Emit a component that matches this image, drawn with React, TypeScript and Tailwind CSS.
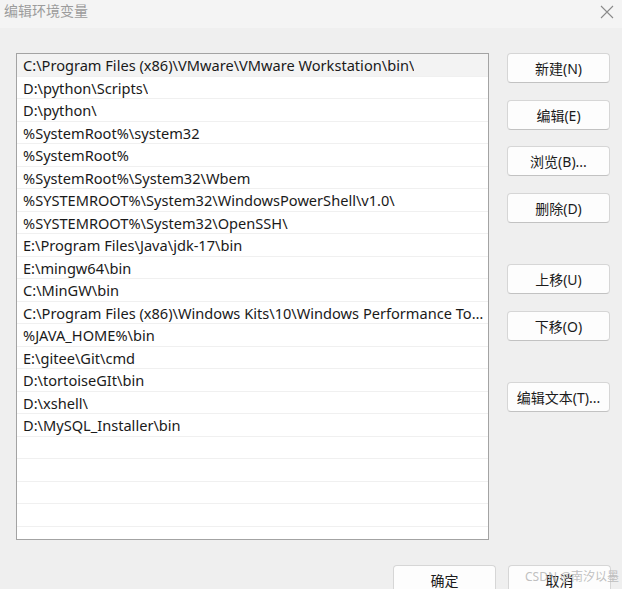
const PATHS = [
  'C:\\Program Files (x86)\\VMware\\VMware Workstation\\bin\\',
  'D:\\python\\Scripts\\',
  'D:\\python\\',
  '%SystemRoot%\\system32',
  '%SystemRoot%',
  '%SystemRoot%\\System32\\Wbem',
  '%SYSTEMROOT%\\System32\\WindowsPowerShell\\v1.0\\',
  '%SYSTEMROOT%\\System32\\OpenSSH\\',
  'E:\\Program Files\\Java\\jdk-17\\bin',
  'E:\\mingw64\\bin',
  'C:\\MinGW\\bin',
  'C:\\Program Files (x86)\\Windows Kits\\10\\Windows Performance Toolkit\\',
  '%JAVA_HOME%\\bin',
  'E:\\gitee\\Git\\cmd',
  'D:\\tortoiseGIt\\bin',
  'D:\\xshell\\',
  'D:\\MySQL_Installer\\bin',
  '',
  '',
  '',
  '',
  '',
]

const FONT = "font-['Segoe_UI','Noto_Sans','Noto_Sans_CJK_SC',sans-serif]"

function DialogButton({ label, className }: { label: string; className?: string }) {
  return (
    <button
      className={`flex h-[30px] w-[103px] items-center justify-center rounded-[4px] border border-[#d6d6d6] border-b-[#c2c2c2] bg-[#fdfdfd] pt-[1px] text-[14px] text-[#1b1b1b] ${className ?? ''}`}
    >
      {label}
    </button>
  )
}

export default function App() {
  return (
    <div className={`relative h-[589px] w-[622px] overflow-hidden bg-[#efefef] ${FONT}`}>
      {/* title bar */}
      <div className="flex h-[28px] items-start justify-between bg-[#f4f4f4] pl-[4px] pr-[8px]">
        <span className="pt-[1px] text-[14px] leading-[20px] text-[#9c9c9c]">编辑环境变量</span>
        <svg className="mt-[5px]" width="14" height="14" viewBox="0 0 14 14">
          <path d="M1 1L13 13M13 1L1 13" stroke="#8a8a8a" strokeWidth="1.1" fill="none" />
        </svg>
      </div>

      <div className="flex pt-[25px]">
        {/* path list */}
        <div className="ml-[16px] h-[487px] w-[473px] overflow-hidden border border-[#a3a3a3] bg-white">
          {PATHS.map((p, i) => (
            <div
              key={i}
              className={`flex h-[22.5px] items-center border-b border-[#f0f0f0] pl-[6px] pr-[3px] pt-[3px] text-[14.6px] text-[#1a1a1a] ${
                i === 0 ? 'bg-[#f3f3f3]' : ''
              }`}
            >
              <span className="truncate">{p}</span>
            </div>
          ))}
        </div>

        {/* side buttons */}
        <div className="ml-[18px] flex flex-col">
          <DialogButton label="新建(N)" />
          <DialogButton label="编辑(E)" className="mt-[17px]" />
          <DialogButton label="浏览(B)..." className="mt-[16px]" />
          <DialogButton label="删除(D)" className="mt-[17px]" />
          <DialogButton label="上移(U)" className="mt-[41px]" />
          <DialogButton label="下移(O)" className="mt-[17px]" />
          <DialogButton label="编辑文本(T)..." className="mt-[41px]" />
        </div>
      </div>

      {/* bottom buttons */}
      <div className="mt-[25px] flex gap-[12px] pl-[393px]">
        <DialogButton label="确定" />
        <DialogButton label="取消" />
      </div>

      {/* watermark */}
      <span className="pointer-events-none absolute left-[525px] top-[568px] text-[12px] text-[#b8b8b8]/90">
        CSDN @南汐以墨
      </span>
    </div>
  )
}
